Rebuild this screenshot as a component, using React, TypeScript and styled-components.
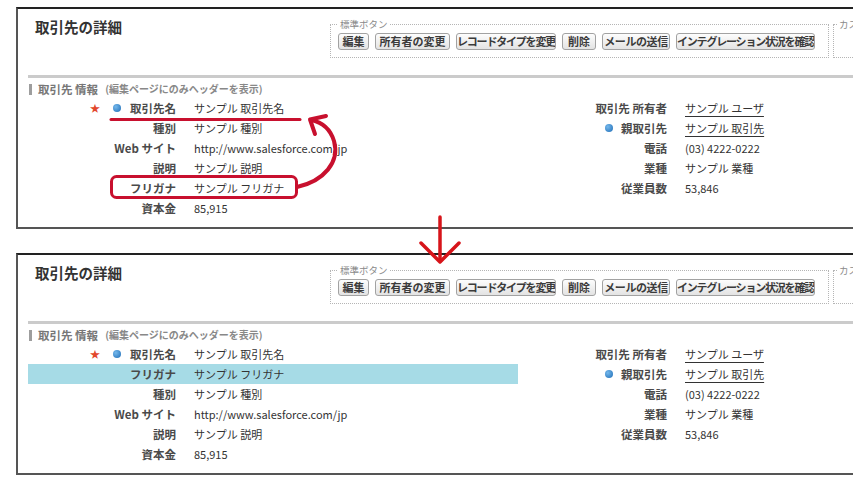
import React from 'react';
import styled, { createGlobalStyle } from 'styled-components';

const Global = createGlobalStyle`
  html, body { margin: 0; padding: 0; background: #fff; overflow: hidden; }
  body { font-family: "Noto Sans CJK JP", "Noto Sans", sans-serif; color: #333; }
`;

const Page = styled.div`
  position: relative;
  width: 853px;
  height: 480px;
  overflow: hidden;
  box-sizing: border-box;
  padding: 7px 0 0 16px;
  display: flex;
  flex-direction: column;
  gap: 24px;
`;

const Panel = styled.section`
  flex: none;
  width: 980px;
  box-sizing: border-box;
  border: 2px solid #555;
  border-top-color: #222;
  border-right: none;
  padding-bottom: 9px;
  background: #fff;
`;

const Header = styled.div`
  display: flex;
  align-items: flex-start;
  padding: 8px 0 17px 17px;
`;

const Title = styled.h2`
  margin: 0;
  flex: 0 0 295px;
  font-size: 14.5px;
  line-height: 20px;
  font-weight: 700;
  color: #333;
`;

const ButtonGroup = styled.fieldset<{ $pl: number; $pr: number; $ml?: number }>`
  flex: none;
  margin: 0 0 0 ${p => p.$ml ?? 0}px;
  min-width: 0;
  border: 1px dotted #b5b5b5;
  padding: 2px ${p => p.$pr}px 7px ${p => p.$pl}px;
`;

const GroupLegend = styled.legend`
  padding: 0 2px;
  font-size: 9.5px;
  line-height: 14px;
  font-weight: 400;
  color: #8a8a8a;
`;

const ButtonRow = styled.div<{ $minW?: number }>`
  display: flex;
  gap: 6px;
  height: 17px;
  min-width: ${p => p.$minW ?? 0}px;
`;

const Btn = styled.button<{ $w: number; $ls?: number }>`
  flex: none;
  width: ${p => p.$w}px;
  height: 17px;
  padding: 0;
  box-sizing: border-box;
  border: 1px solid #a2a2a2;
  border-radius: 3px;
  background: linear-gradient(#fdfdfd, #e3e3e3);
  font-family: inherit;
  font-size: 11px;
  line-height: 15px;
  font-weight: 700;
  color: #3b3b3b;
  letter-spacing: ${p => p.$ls ?? 0}px;
  white-space: nowrap;
  overflow: hidden;
  text-align: center;
`;

const Body = styled.div`
  margin-left: 10px;
`;

const Divider = styled.hr`
  margin: 0;
  height: 0;
  border: none;
  border-top: 3px solid #cbcbcb;
`;

const SectionHead = styled.h3`
  margin: 4px 0 0;
  height: 14px;
  display: flex;
  align-items: center;
  font-size: 11.5px;
  line-height: 14px;
  font-weight: 700;
  color: #777;
  white-space: nowrap;
`;

const Grip = styled.span`
  width: 3px;
  height: 11px;
  margin: 0 6px 0 1px;
  background-image: radial-gradient(circle, #9a9a9a 0.7px, transparent 0.9px);
  background-size: 2px 2px;
`;

const SectionNote = styled.span`
  margin-left: 7px;
  font-size: 10px;
  color: #888;
`;

const Fields = styled.div`
  display: flex;
  margin-top: 2px;
`;

const Column = styled.dl<{ $w?: number }>`
  margin: 0;
  display: flex;
  flex-direction: column;
  width: ${p => (p.$w ? `${p.$w}px` : 'auto')};
  flex: none;
`;

const Row = styled.div<{ $label: number; $hl?: boolean }>`
  display: grid;
  grid-template-columns: ${p => p.$label}px 1fr;
  align-items: center;
  height: 20px;
  background: ${p => (p.$hl ? '#a6dbe6' : 'transparent')};
`;

const Label = styled.dt`
  margin: 0;
  display: flex;
  justify-content: flex-end;
  align-items: center;
  font-size: 11.5px;
  line-height: 20px;
  font-weight: 700;
  color: #4a4a4a;
  white-space: nowrap;
`;

const Value = styled.dd`
  margin: 0;
  padding-left: 18px;
  font-size: 11px;
  line-height: 20px;
  color: #333;
  white-space: nowrap;
`;

const ValueLink = styled.a`
  color: #333;
  text-decoration: underline;
  text-underline-offset: 3px;
  text-decoration-thickness: 1px;
`;

const Star = styled.span`
  color: #e2472c;
  font-size: 10px;
  line-height: 1;
  margin-right: 13px;
`;

const Dot = styled.span<{ $mr: number }>`
  width: 8px;
  height: 8px;
  border-radius: 50%;
  background: radial-gradient(circle at 35% 35%, #74b8ec, #1f6db6);
  margin-right: ${p => p.$mr}px;
`;

const Overlay = styled.svg`
  position: absolute;
  left: 0;
  top: 0;
  width: 853px;
  height: 480px;
  pointer-events: none;
`;

type Field = {
  label: string;
  value: string;
  star?: boolean;
  dot?: boolean;
  link?: boolean;
  hl?: boolean;
};

const buttons: { t: string; w: number; ls?: number }[] = [
  { t: '編集', w: 31 },
  { t: '所有者の変更', w: 75 },
  { t: 'レコードタイプを変更', w: 100, ls: -1.2 },
  { t: '削除', w: 34 },
  { t: 'メールの送信', w: 68, ls: -0.4 },
  { t: 'インテグレーション状況を確認', w: 139, ls: -1.2 },
];

const rightFields: Field[] = [
  { label: '取引先 所有者', value: 'サンプル ユーザ', link: true },
  { label: '親取引先', value: 'サンプル 取引先', link: true, dot: true },
  { label: '電話', value: '(03) 4222-0222' },
  { label: '業種', value: 'サンプル 業種' },
  { label: '従業員数', value: '53,846' },
];

const topLeft: Field[] = [
  { label: '取引先名', value: 'サンプル 取引先名', star: true, dot: true },
  { label: '種別', value: 'サンプル 種別' },
  { label: 'Web サイト', value: 'http://www.salesforce.com/jp' },
  { label: '説明', value: 'サンプル 説明' },
  { label: 'フリガナ', value: 'サンプル フリガナ' },
  { label: '資本金', value: '85,915' },
];

const bottomLeft: Field[] = [
  { label: '取引先名', value: 'サンプル 取引先名', star: true, dot: true },
  { label: 'フリガナ', value: 'サンプル フリガナ', hl: true },
  { label: '種別', value: 'サンプル 種別' },
  { label: 'Web サイト', value: 'http://www.salesforce.com/jp' },
  { label: '説明', value: 'サンプル 説明' },
  { label: '資本金', value: '85,915' },
];

function FieldRow({ f, labelW }: { f: Field; labelW: number }) {
  return (
    <Row $label={labelW} $hl={f.hl}>
      <Label>
        {f.star && <Star>★</Star>}
        {f.dot && <Dot $mr={labelW > 148 ? 8 : 9} />}
        {f.label}
      </Label>
      <Value>{f.link ? <ValueLink href="#">{f.value}</ValueLink> : f.value}</Value>
    </Row>
  );
}

function DetailPanel({ left }: { left: Field[] }) {
  return (
    <Panel>
      <Header>
        <Title>取引先の詳細</Title>
        <ButtonGroup $pl={7} $pr={13}>
          <GroupLegend>標準ボタン</GroupLegend>
          <ButtonRow>
            {buttons.map(b => (
              <Btn key={b.t} $w={b.w} $ls={b.ls}>
                {b.t}
              </Btn>
            ))}
          </ButtonRow>
        </ButtonGroup>
        <ButtonGroup $pl={3} $pr={7} $ml={4}>
          <GroupLegend>カスタムボタン</GroupLegend>
          <ButtonRow $minW={120} />
        </ButtonGroup>
      </Header>
      <Body>
        <Divider />
        <SectionHead>
          <Grip />
          取引先 情報
          <SectionNote>(編集ページにのみヘッダーを表示)</SectionNote>
        </SectionHead>
        <Fields>
          <Column $w={490}>
            {left.map(f => (
              <FieldRow key={f.label} f={f} labelW={148} />
            ))}
          </Column>
          <Column>
            {rightFields.map(f => (
              <FieldRow key={f.label} f={f} labelW={149} />
            ))}
          </Column>
        </Fields>
      </Body>
    </Panel>
  );
}

export default function App() {
  return (
    <>
      <Global />
      <Page>
        <DetailPanel left={topLeft} />
        <DetailPanel left={bottomLeft} />
        <Overlay viewBox="0 0 853 480">
          <g fill="none" stroke="#c8102e" strokeLinecap="round" strokeLinejoin="round">
            <line x1="111" y1="119.5" x2="300" y2="119.5" strokeWidth="3" />
            <rect x="111.5" y="176.5" width="185" height="21" rx="5" strokeWidth="3" />
            <path d="M297 187 C324 181 340 162 334 141 C330 128 321 122 311 120" strokeWidth="4" />
            <path d="M315 134 L310 119.5 L326 116" strokeWidth="4" />
          </g>
          <g fill="none" stroke="#d7141a" strokeWidth="3.5" strokeLinecap="round" strokeLinejoin="round">
            <line x1="440" y1="217" x2="440" y2="260" />
            <path d="M421 243 L440 262 L459 243" />
          </g>
        </Overlay>
      </Page>
    </>
  );
}
